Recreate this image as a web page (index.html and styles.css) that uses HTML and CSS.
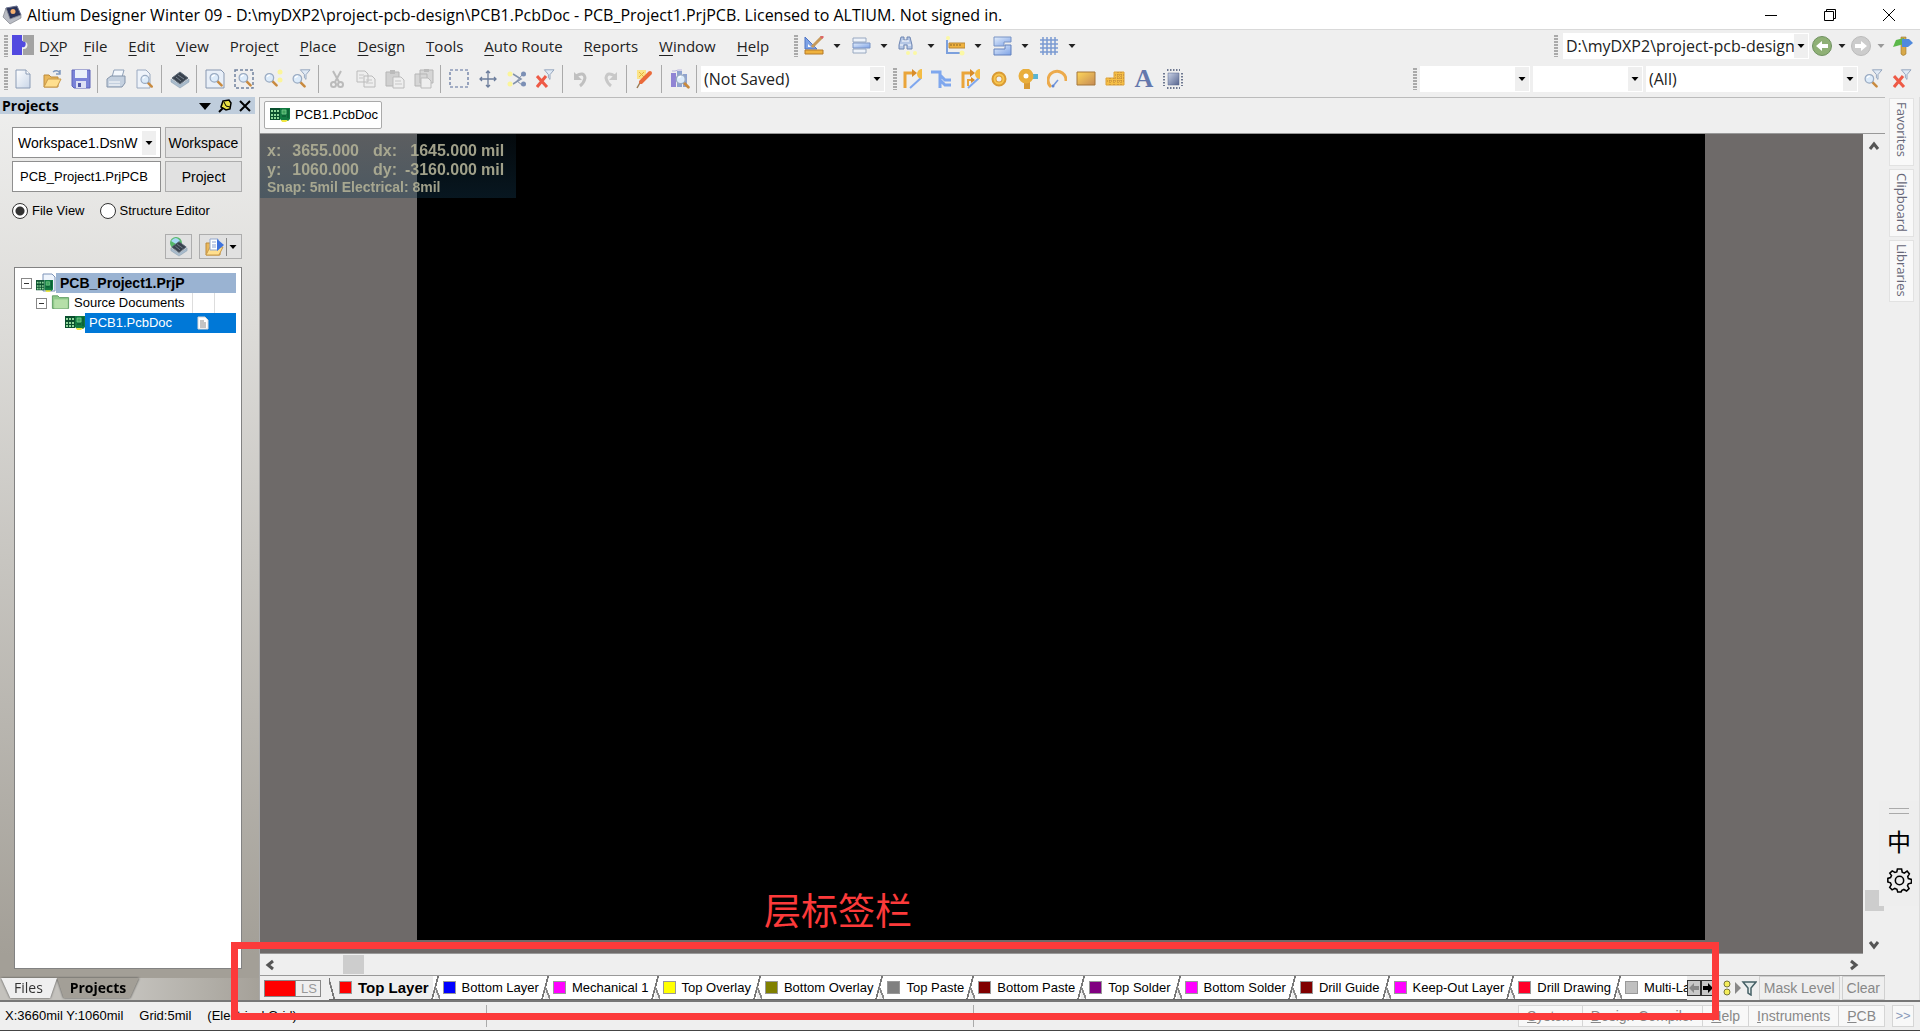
FILE: index.html
```html
<!DOCTYPE html>
<html lang="en">
<head>
    <meta charset="UTF-8">
    <title>Altium Designer Winter 09</title>
    <link rel="stylesheet" href="styles.css">
</head>
<body>
<!-- shared icons -->
<svg class="defs" width="0" height="0">
    <defs>
        <linearGradient id="gBlue" x1="0" y1="0" x2="1" y2="1"><stop offset="0" stop-color="#e4eefb"/><stop offset="1" stop-color="#7da2e6"/></linearGradient>
        <linearGradient id="gGold" x1="0" y1="0" x2="1" y2="1"><stop offset="0" stop-color="#ffd75a"/><stop offset="1" stop-color="#c58a55"/></linearGradient>
        <linearGradient id="gChip" x1="0" y1="0" x2="1" y2="1"><stop offset="0" stop-color="#c9d2e6"/><stop offset="1" stop-color="#56648f"/></linearGradient>
        <linearGradient id="gPage" x1="0" y1="0" x2="1" y2="1"><stop offset="0" stop-color="#fff"/><stop offset="1" stop-color="#c9d6e8"/></linearGradient>
    </defs>
    <symbol id="down" viewBox="0 0 8 8"><path d="M0.500 2h7L4 6z" fill="currentColor"/></symbol>
    <symbol id="lens" viewBox="0 0 20 20"><path d="M11 12l5 5" stroke="#c98a3e" stroke-width="3" stroke-linecap="round"/><circle cx="7.500" cy="8" r="5" fill="#dcebfa" stroke="#9aabc2" stroke-width="1.500"/><path d="M5 7a3 3 0 0 1 3-2" stroke="#fff" stroke-width="1.500" fill="none"/></symbol>
    <symbol id="funnel" viewBox="0 0 20 20"><path d="M8 1h12l-5 6v6l-2-2V7z" fill="#dfe9f5" stroke="#8497b3"/></symbol>
    <symbol id="chip" viewBox="0 0 20 20"><path d="M1 10l9 6 9-6v3l-9 6-9-6z" fill="#a9bccd" stroke="#8296a8" stroke-width=".5"/><path d="M2 9l8-6 8 6-8 6z" fill="#39424e" stroke="#5b6876"/><path d="M8 6l6 4M6 8l5 4" stroke="#77838f"/></symbol>
    <symbol id="pcb" viewBox="0 0 20 16"><path d="M0 1h10v12H0z" fill="#0a4f2e"/><path d="M1 4h2M1 8h2M1 11h2M4 4h2M4 8h2M4 11h2M7 4h2M7 8h2M7 11h2" stroke="#8fd79b" stroke-width="2"/><path d="M10 1h10v11l-2 2h-6l-2-2z" fill="#127a41"/><path d="M12 3h4v4h-4z" fill="#3da35c" stroke="#7fd092" stroke-width=".7"/><path d="M18 2v9M12 9h4" stroke="#0a4f2e"/><path d="M11 13h7l-2 2h-4z" fill="#f1e742"/></symbol>
    <symbol id="folder" viewBox="0 0 20 20"><path d="M2 18V6h5l2 2h7v10z" fill="#e9b75b" stroke="#bd8b3b"/><path d="M2 18l4-8h13l-4 8z" fill="#ffdf8e" stroke="#c99a4a"/></symbol>
    <symbol id="route" viewBox="0 0 20 20"><path d="M3 19V4h8" fill="none" stroke="#eaa53a" stroke-width="3"/><path d="M10 0l5 4-5 4z" fill="#d88c2a"/><path d="M8 19L19 9" stroke="#7fa7ee" stroke-width="2"/><path d="M20 0a4.500 4.500 0 0 0 0 10z" fill="#f4bc44"/></symbol>
</svg>

<header class="titlebar">
    <svg class="appicon" viewBox="0 0 20 20"><path d="M4 3l11-2 4 9-11 4z" fill="#2b3358" stroke="#68708f"/><path d="M4 3L1 12l7 7 11-6V10L8 14z" fill="#b9bcc4" stroke="#74777f" stroke-width=".6"/><circle cx="11" cy="6.500" r="2.500" fill="#f5b070"/></svg>
    <h1>Altium Designer Winter 09 - D:\myDXP2\project-pcb-design\PCB1.PcbDoc - PCB_Project1.PrjPCB. Licensed to ALTIUM. Not signed in.</h1>
    <div class="winbtns">
        <button aria-label="Minimize"><svg viewBox="0 0 14 14"><path d="M1 7.500h12"/></svg></button>
        <button aria-label="Restore"><svg viewBox="0 0 14 14"><path d="M1.500 3.500h9v9h-9zM3.500 3V1.500h9v9H11"/></svg></button>
        <button aria-label="Close"><svg viewBox="0 0 14 14"><path d="M1 1l12 12M13 1L1 13"/></svg></button>
    </div>
</header>

<div class="bar menubar">
    <i class="grip"></i>
    <nav class="menu">
        <button class="dxp"><svg viewBox="0 0 22 20"><path d="M0 0h10v6c5-2 5 8 0 6v8H0z" fill="#5149e0"/><path d="M11 0h11v20H11v-6c6 1 6-9 0-7z" fill="#a3a3a3"/></svg><span>D<u>X</u>P</span></button>
        <button><u>F</u>ile</button>
        <button><u>E</u>dit</button>
        <button><u>V</u>iew</button>
        <button>Proje<u>c</u>t</button>
        <button><u>P</u>lace</button>
        <button><u>D</u>esign</button>
        <button><u>T</u>ools</button>
        <button><u>A</u>uto Route</button>
        <button><u>R</u>eports</button>
        <button><u>W</u>indow</button>
        <button><u>H</u>elp</button>
    </nav>
    <i class="grip"></i>
    <div class="drops">
        <button aria-label="Utility tools"><svg class="ic" viewBox="0 0 20 20"><path d="M1 1l12 12H1z" fill="#7da2e6" stroke="#4e74c4"/><path d="M4 8l3 3H4z" fill="#fff"/><path d="M8 11L18 1" stroke="#c79a5a" stroke-width="3"/><path d="M17 2l2-2" stroke="#d66" stroke-width="3"/><path d="M1 14h18v4H1z" fill="#efb23e" stroke="#b57a28"/></svg><svg class="dn"><use href="#down"/></svg></button>
        <button aria-label="Alignment tools"><svg class="ic" viewBox="0 0 20 20"><path d="M2 2h13v4H2zM2 13h13v4H2z" fill="#eef3fa" stroke="#98a8c0"/><path d="M2 7h17v5H2z" fill="url(#gBlue)" stroke="#7893c4"/></svg><svg class="dn"><use href="#down"/></svg></button>
        <button aria-label="Find selections"><svg class="ic" viewBox="0 0 20 20"><path d="M3 1h3v3h3V1h3l2 8v4H9V9H6v4H1V9z" fill="#b5c7e6" stroke="#6f86b2"/><path d="M2 9h3M10 9h3M4 5h7" stroke="#fff"/><circle cx="10" cy="17" r="2" fill="#fbf8a5"/><circle cx="17" cy="17" r="2" fill="#fbf8a5"/></svg><svg class="dn"><use href="#down"/></svg></button>
        <button aria-label="Dimensions"><svg class="ic" viewBox="0 0 20 20"><path d="M2 4v13h14" fill="none" stroke="#7ca0dd" stroke-width="2"/><path d="M4 7h16v5H4z" fill="#f0b23e" stroke="#b98838"/><path d="M6 8v2M9 8v2M12 8v2M15 8v2" stroke="#8a6427"/><circle cx="3" cy="2" r="2" fill="#fbf8a5"/><circle cx="17" cy="17" r="2.500" fill="#fbf8a5"/></svg><svg class="dn"><use href="#down"/></svg></button>
        <button aria-label="Rooms"><svg class="ic" viewBox="0 0 20 20"><path d="M2 1h17v5h-7v4H2z" fill="url(#gBlue)" stroke="#7893c4"/><path d="M19 9v10H2v-6h11V9z" fill="url(#gBlue)" stroke="#6381bd"/></svg><svg class="dn"><use href="#down"/></svg></button>
        <button aria-label="Grids"><svg class="ic" viewBox="0 0 20 20"><path d="M4 1v18M8 1v18M12 1v18M16 1v18M1 4h18M1 8h18M1 12h18M1 16h18" stroke="#7b9bd2" stroke-width="1.500"/></svg><svg class="dn"><use href="#down"/></svg></button>
    </div>
    <div class="right">
        <i class="grip"></i>
        <label class="combo w-path"><select aria-label="Path"><option>D:\myDXP2\project-pcb-design</option></select><svg class="dn"><use href="#down"/></svg></label>
        <button class="navbtn" aria-label="Back"><svg class="ic" viewBox="0 0 20 20"><circle cx="10" cy="10" r="9.500" fill="#8fb075" stroke="#6f9160"/><path d="M4 10l6-5v3h6v4h-6v3z" fill="#fff"/></svg><svg class="dn"><use href="#down"/></svg></button>
        <button class="navbtn off" aria-label="Forward"><svg class="ic" viewBox="0 0 20 20"><circle cx="10" cy="10" r="9.500" fill="#ccc" stroke="#bbb"/><path d="M16 10l-6-5v3H4v4h6v3z" fill="#fff"/></svg><svg class="dn"><use href="#down"/></svg></button>
        <button class="tool" aria-label="Home"><svg class="ic" viewBox="0 0 20 20"><path d="M8 1h5v17q-3 3-5 0z" fill="#d8a94a" stroke="#9a7730" stroke-width=".6"/><path d="M0 11L3 4l8-2v6z" fill="#5cb84a"/><path d="M9 3h7l4 4-5 4H9z" fill="#5089dc"/></svg></button>
    </div>
</div>

<div class="bar toolbar">
    <i class="grip"></i>
    <div class="tools">
        <button class="tool" aria-label="New"><svg class="ic" viewBox="0 0 20 20"><path d="M3 1h10l4 4v14H3z" fill="url(#gPage)" stroke="#8a9bb5"/><path d="M13 1v4h4" fill="#fff" stroke="#8a9bb5"/></svg></button>
        <button class="tool" aria-label="Open"><svg class="ic" viewBox="0 0 20 20"><use href="#folder"/><path d="M11 3q4-3 7 1m0-3v4h-4" fill="none" stroke="#8099bf" stroke-width="1.500"/></svg></button>
        <button class="tool" aria-label="Save"><svg class="ic" viewBox="0 0 20 20"><path d="M1 1h18v18H3l-2-2z" fill="#7a83d8" stroke="#5d63b8"/><path d="M4 1h12v8H4z" fill="#eaf0fa"/><path d="M5 12h10v7H5z" fill="#dde0f4"/><path d="M7 14h3v4H7z" fill="#5158a8"/></svg></button>
        <i class="sep"></i>
        <button class="tool" aria-label="Print"><svg class="ic" viewBox="0 0 20 20"><path d="M6 8l2-7h10l-2 7z" fill="#f4f8fd" stroke="#8fa0b8"/><path d="M1 10l4-3h14v7l-3 4H1z" fill="#c4d0df" stroke="#8494aa"/><path d="M3 13h11M3 16h11" stroke="#fff"/></svg></button>
        <button class="tool" aria-label="Print preview"><svg class="ic" viewBox="0 0 20 20"><path d="M2 1h9l4 4v14H2z" fill="#eef3fa" stroke="#9aa9c0"/><svg x="4" y="4" width="16" height="16"><use href="#lens"/></svg></svg></button>
        <i class="sep"></i>
        <button class="tool" aria-label="Devices"><svg class="ic"><use href="#chip"/></svg></button>
        <i class="sep"></i>
        <button class="tool" aria-label="Fit document"><svg class="ic" viewBox="0 0 20 20"><path d="M1 1h15l3 3v15H1z" fill="#e8eff8" stroke="#8797b0"/><svg x="3" y="2" width="17" height="17"><use href="#lens"/></svg></svg></button>
        <button class="tool" aria-label="Fit area"><svg class="ic" viewBox="0 0 20 20"><path d="M1 1h18v18H1z" fill="none" stroke="#71829f" stroke-width="1.500" stroke-dasharray="3 2"/><svg x="3" y="2" width="17" height="17"><use href="#lens"/></svg></svg></button>
        <button class="tool" aria-label="Zoom selected"><svg class="ic" viewBox="0 0 20 20"><svg x="0" y="2" width="17" height="17"><use href="#lens"/></svg><circle cx="17" cy="3" r="2.500" fill="#fbf59a"/><circle cx="17" cy="11" r="2.500" fill="#fbf59a"/></svg></button>
        <button class="tool" aria-label="Zoom filtered"><svg class="ic" viewBox="0 0 20 20"><svg x="-1" y="3" width="17" height="17"><use href="#lens"/></svg><use href="#funnel" width="20" height="16"/></svg></button>
        <i class="sep"></i>
        <button class="tool" aria-label="Cut" disabled><svg class="ic" viewBox="0 0 20 20"><path d="M6 2l6 11M14 2L8 13" stroke="#bbb" stroke-width="2"/><circle cx="6.500" cy="15.500" r="2.500" fill="none" stroke="#bbb" stroke-width="2"/><circle cx="13.500" cy="15.500" r="2.500" fill="none" stroke="#bbb" stroke-width="2"/></svg></button>
        <button class="tool" aria-label="Copy" disabled><svg class="ic" viewBox="0 0 20 20"><path d="M1 2h8l3 3v8H1zM8 7h8l3 3v8H8z" fill="#eee" stroke="#bbb"/><path d="M3 6h5M3 9h4M10 11h6M10 14h7" stroke="#c6c6c6"/></svg></button>
        <button class="tool" aria-label="Paste" disabled><svg class="ic" viewBox="0 0 20 20"><path d="M1 3h13v14H1z" fill="#d0d0d0" stroke="#b5b5b5"/><path d="M5 1h5v4H5z" fill="#bbb"/><path d="M8 8h8l3 3v8H8z" fill="#eee" stroke="#bbb"/><path d="M10 12h6M10 15h7" stroke="#c6c6c6"/></svg></button>
        <button class="tool" aria-label="Rubber stamp" disabled><svg class="ic" viewBox="0 0 20 20"><path d="M6 1h13v13H6zM1 5h12v12H1z" fill="#d6d6d6" stroke="#b5b5b5"/><path d="M10 0h5v3h-5z" fill="#bbb"/><path d="M7 9h7l3 3v7H7z" fill="#eee" stroke="#bbb"/></svg></button>
        <i class="sep"></i>
        <button class="tool" aria-label="Select area"><svg class="ic" viewBox="0 0 20 20"><path d="M1 1h18v17H1z" fill="none" stroke="#5b6f9b" stroke-width="1.200" stroke-dasharray="3 2"/></svg></button>
        <button class="tool" aria-label="Move"><svg class="ic" viewBox="0 0 20 20"><path d="M10 2v16M2 10h16M8 4l2-2 2 2M8 16l2 2 2-2M4 8l-2 2 2 2M16 8l2 2-2 2" fill="none" stroke="#6c7d9c" stroke-width="1.300"/></svg></button>
        <button class="tool" aria-label="Deselect"><svg class="ic" viewBox="0 0 20 20"><path d="M6 5l8 5-8 5" fill="none" stroke="#8392ab" stroke-width="1.500"/><path d="M9 13l6-7M10 12l5 4" stroke="#8392ab"/><circle cx="3" cy="5" r="2.500" fill="#fbf59a"/><circle cx="3" cy="15" r="2.500" fill="#fbf59a"/><circle cx="16.500" cy="5" r="2.500" fill="#7b8fb5"/><circle cx="16.500" cy="15" r="2.500" fill="#7b8fb5"/></svg></button>
        <button class="tool" aria-label="Clear filter"><svg class="ic" viewBox="0 0 20 20"><use href="#funnel" width="20" height="16"/><path d="M1 7l10 11M10 7L1 18" stroke="#ee5a46" stroke-width="3"/></svg></button>
        <i class="sep"></i>
        <button class="tool" aria-label="Undo" disabled><svg class="ic" viewBox="0 0 20 20"><path d="M5 7q8-5 9 2-1 5-5 8" fill="none" stroke="#c0c0c0" stroke-width="3"/><path d="M3 3v8h8z" fill="#c0c0c0"/></svg></button>
        <button class="tool" aria-label="Redo" disabled><svg class="ic" viewBox="0 0 20 20"><path d="M15 7Q7 2 6 9q1 5 5 8" fill="none" stroke="#c8c8c8" stroke-width="3"/><path d="M17 3v8H9z" fill="#c8c8c8"/></svg></button>
        <i class="sep"></i>
        <button class="tool" aria-label="Cross probe"><svg class="ic" viewBox="0 0 20 20"><path d="M2 1h9v9H2z" fill="#fbe488"/><path d="M4 3l5 5M9 3L4 8" stroke="#e7b53c"/><path d="M2 19l4-7" stroke="#9a7a52" stroke-width="1.500"/><path d="M6 13l9-9" stroke="#ea6a3a" stroke-width="4" stroke-linecap="round"/></svg></button>
        <i class="sep"></i>
        <button class="tool" aria-label="Browse components"><svg class="ic" viewBox="0 0 20 20"><path d="M1 4h5v14H1z" fill="#9084d4"/><path d="M7 2h5v16H7zM13 5h4v13h-4z" fill="#8fa3d0"/><path d="M2 2h3l3-1h4" stroke="#b9b4dd" fill="none"/><svg x="4" y="3" width="18" height="18"><use href="#lens"/></svg></svg></button>
        <i class="sep"></i>
    </div>
    <label class="combo w-saved"><select aria-label="Saved query"><option>(Not Saved)</option></select><svg class="dn"><use href="#down"/></svg></label>
    <i class="grip"></i>
    <div class="tools">
        <button class="tool" aria-label="Interactive routing"><svg class="ic"><use href="#route"/></svg></button>
        <button class="tool" aria-label="Multi-routing"><svg class="ic" viewBox="0 0 20 20"><path d="M0 3h9v16M9 6l5 5h6M9 11l5 5h6" fill="none" stroke="#7fa7ee" stroke-width="3"/></svg></button>
        <button class="tool" aria-label="Differential pair"><svg class="ic" viewBox="0 0 20 20"><use href="#route"/><path d="M8 17v-6h4" fill="none" stroke="#eaa53a" stroke-width="2"/><path d="M11 8l4 3-4 3z" fill="#d88c2a"/></svg></button>
        <button class="tool" aria-label="Pad"><svg class="ic" viewBox="0 0 20 20"><circle cx="10" cy="10" r="5" fill="none" stroke="#d99a34" stroke-width="5"/><circle cx="10" cy="10" r="4.500" fill="none" stroke="#f7c64f" stroke-width="2"/></svg></button>
        <button class="tool" aria-label="Via"><svg class="ic" viewBox="0 0 20 20"><path d="M6 12h6v8H6z" fill="#d99a34"/><path d="M13 5h7v5h-7z" fill="#58b4d4"/><circle cx="8" cy="7" r="5" fill="#fff" stroke="#e9ae3c" stroke-width="5"/></svg></button>
        <button class="tool" aria-label="Arc"><svg class="ic" viewBox="0 0 20 20"><path d="M4 18A9 9 0 1 1 19 12" fill="none" stroke="#ecaa4c" stroke-width="3"/><path d="M6 17l5-6" stroke="#7297dd" stroke-width="1.500"/><circle cx="6" cy="17" r="1.500" fill="#5d85d4"/></svg></button>
        <button class="tool" aria-label="Fill"><svg class="ic" viewBox="0 0 20 20"><path d="M1 3h18v13H1z" fill="url(#gGold)" stroke="#a5763a"/></svg></button>
        <button class="tool" aria-label="Polygon"><svg class="ic" viewBox="0 0 20 20"><path d="M9 3h10v13H1V9h8z" fill="#f6bf45" stroke="#dca23a"/><path d="M2 12h17M10 6h9M10 9h9M5 9v7M9 9v7M13 3v13M16 3v13" stroke="#b9823a" stroke-dasharray="1 1"/></svg></button>
        <button class="tool letter" aria-label="String">A</button>
        <button class="tool" aria-label="Component"><svg class="ic" viewBox="0 0 20 20"><path d="M4 1h13M4 19h13M1 4v13M19 4v13" fill="none" stroke="#6e7890" stroke-width="2" stroke-dasharray="1.500 1.500"/><path d="M5 4h11v12H5z" fill="url(#gChip)" stroke="#56648f" stroke-width=".5"/></svg></button>
    </div>
    <div class="right">
        <i class="grip"></i>
        <label class="combo w-small"><select aria-label="Net"><option></option></select><svg class="dn"><use href="#down"/></svg></label>
        <label class="combo w-small"><select aria-label="Component"><option></option></select><svg class="dn"><use href="#down"/></svg></label>
        <label class="combo w-all"><select aria-label="Filter"><option>(All)</option></select><svg class="dn"><use href="#down"/></svg></label>
        <button class="tool" aria-label="Apply filter"><svg class="ic" viewBox="0 0 20 20"><svg x="-1" y="3" width="17" height="17"><use href="#lens"/></svg><use href="#funnel" width="20" height="16"/></svg></button>
        <button class="tool" aria-label="Clear current filter"><svg class="ic" viewBox="0 0 20 20"><use href="#funnel" width="20" height="16"/><path d="M1 7l10 11M10 7L1 18" stroke="#ee5a46" stroke-width="3"/></svg></button>
    </div>
</div>

<main class="work">
    <aside class="panel">
        <header class="panel-head">
            <h2>Projects</h2>
            <button aria-label="Panel menu"><svg viewBox="0 0 14 14"><path d="M1 4h12l-6 7z"/></svg></button>
            <button aria-label="Pin"><svg viewBox="0 0 14 14"><path d="M1 13l4-4" stroke="#000" stroke-width="2"/><path d="M5 2l6-1 2 3-1 6-4 1-5-3z" fill="#e8df45" stroke="#000" stroke-width="1.500"/><path d="M6 3l2 4 4 1" fill="none" stroke="#000"/></svg></button>
            <button aria-label="Close panel"><svg viewBox="0 0 14 14"><path d="M2 2l10 10M12 2L2 12" stroke="#000" stroke-width="2"/></svg></button>
        </header>
        <div class="panel-body">
            <div class="pick">
                <label class="field combo"><select aria-label="Workspace file"><option>Workspace1.DsnW</option></select><svg class="dn"><use href="#down"/></svg></label>
                <button>Workspace</button>
                <input class="field" type="text" value="PCB_Project1.PrjPCB" aria-label="Project file">
                <button>Project</button>
            </div>
            <div class="views">
                <label><input type="radio" name="view" checked>File View</label>
                <label><input type="radio" name="view">Structure Editor</label>
            </div>
            <div class="actions">
                <button aria-label="Compile"><svg class="ic" viewBox="0 0 20 20"><circle cx="7" cy="6" r="6" fill="#55b86a"/><path d="M2 4q5-6 9 0l-4 3z" fill="#a8d8f5"/><use href="#chip" y="2" width="20" height="18"/></svg></button>
                <button class="wide" aria-label="Open project"><svg class="ic" viewBox="0 0 20 20"><use href="#folder"/><path d="M6 2h8v11H6z" fill="#fff" stroke="#93a7cc"/><path d="M8 5h4M8 8h4M8 10h4" stroke="#8aa0d0"/><path d="M13 2l7 6-7 6z" fill="#3f73dd"/></svg><i class="bar-v"></i><svg class="dn"><use href="#down"/></svg></button>
            </div>
            <ul class="tree">
                <li class="lv1"><i class="minus"></i><svg class="ic" viewBox="0 0 20 20"><path d="M7 1h9l3 3v14H7z" fill="#eef4fc" stroke="#7d93b8"/><use href="#pcb" y="6" width="17" height="14"/></svg><span>PCB_Project1.PrjP</span></li>
                <li class="lv2"><i class="minus"></i><svg class="ic" viewBox="0 0 20 20"><path d="M1 16V2h6l2 2h10v12z" fill="#8fc98a" stroke="#5c9a61"/><path d="M3 6h15v10H3z" fill="#b5dfa8"/></svg><span>Source Documents</span><i class="cell"></i><i class="cell"></i></li>
                <li class="lv3"><svg class="ic"><use href="#pcb"/></svg><span>PCB1.PcbDoc</span><svg class="doc" viewBox="0 0 12 14"><path d="M1 1h7l3 3v9H1z" fill="#fff" stroke="#d8d8d8"/><path d="M3 5h4M3 7h6M3 9h6M3 11h6" stroke="#888"/></svg></li>
            </ul>
        </div>
        <div class="panel-tabs">
            <div class="tabset">
                <button class="files">Files</button>
                <button class="current">Projects</button>
            </div>
        </div>
    </aside>

    <section class="editor">
        <div class="doctabs">
            <button><svg class="ic"><use href="#pcb"/></svg>PCB1.PcbDoc</button>
        </div>
        <div class="view">
            <div class="canvas">
                <div class="board"></div>
                <div class="hud">
                    <b>x:</b><b class="num">3655.000</b><b>dx:</b><b class="num delta">1645.000</b><b>mil</b>
                    <b>y:</b><b class="num">1060.000</b><b>dy:</b><b class="num delta">-3160.000</b><b>mil</b>
                    <b class="snap">Snap: 5mil Electrical: 8mil</b>
                </div>
            </div>
            <div class="vscroll">
                <svg viewBox="0 0 12 12"><path d="M2 9l4-5 4 5"/></svg>
                <i class="thumb"></i>
                <svg viewBox="0 0 12 12"><path d="M2 3l4 5 4-5"/></svg>
            </div>
        </div>
        <div class="hscroll">
            <svg viewBox="0 0 12 12"><path d="M9 2L4 6l5 4"/></svg>
            <i class="thumb"></i>
            <svg viewBox="0 0 12 12"><path d="M3 2l5 4-5 4"/></svg>
        </div>
        <div class="layers">
            <button class="ls"><i></i>LS</button>
            <div class="tabs">
                <button class="current"><i class="c-red"></i>Top Layer</button>
                <button><i class="c-blue"></i>Bottom Layer</button>
                <button><i class="c-magenta"></i>Mechanical 1</button>
                <button><i class="c-yellow"></i>Top Overlay</button>
                <button><i class="c-olive"></i>Bottom Overlay</button>
                <button><i class="c-gray"></i>Top Paste</button>
                <button><i class="c-maroon"></i>Bottom Paste</button>
                <button><i class="c-purple"></i>Top Solder</button>
                <button><i class="c-magenta"></i>Bottom Solder</button>
                <button><i class="c-maroon"></i>Drill Guide</button>
                <button><i class="c-magenta"></i>Keep-Out Layer</button>
                <button><i class="c-crimson"></i>Drill Drawing</button>
                <button><i class="c-silver"></i>Multi-Layer</button>
            </div>
            <div class="shift">
                <button disabled aria-label="Scroll tabs left"><svg viewBox="0 0 12 12"><path d="M1 6l5-5v3h5v4H6v3z" fill="#888"/></svg></button>
                <button aria-label="Scroll tabs right"><svg viewBox="0 0 12 12"><path d="M11 6L6 1v3H1v4h5v3z"/></svg></button>
            </div>
            <div class="mask">
                <svg viewBox="0 0 34 16"><circle cx="4" cy="4" r="3" fill="#f5ee5a" stroke="#77753a"/><circle cx="4" cy="12" r="3" fill="#f5ee5a" stroke="#77753a"/><path d="M12 2l6 6-6 6z" fill="#888"/><path d="M20 2h13l-5 6v7l-3-2V8z" fill="#e3eaea" stroke="#456066" stroke-width="1.500"/></svg>
                <button>Mask Level</button>
                <button>Clear</button>
            </div>
        </div>
    </section>

    <aside class="sidetabs">
        <button>Favorites</button>
        <button>Clipboard</button>
        <button>Libraries</button>
    </aside>
</main>

<footer class="status">
    <div class="cell-first"><span>X:3660mil Y:1060mil</span><span>Grid:5mil</span><span>(Electrical Grid)</span></div>
    <div class="cell-mid"></div>
    <div class="panels">
        <button><u>S</u>ystem</button>
        <button><u>D</u>esign Compiler</button>
        <button><u>H</u>elp</button>
        <button><u>I</u>nstruments</button>
        <button><u>P</u>CB</button>
    </div>
    <button class="more">&gt;&gt;</button>
</footer>

<div class="ime">
    <i></i>
    <span lang="zh">中</span>
    <svg viewBox="0 0 24 24"><path d="M10 1h4l.6 3 2 .9L19.300 3l2.200 2.700-1.600 2.600.6 1.900 3 .8v3.400l-3 .8-.8 1.900 1.500 2.700-2.400 2.300-2.600-1.500-1.900.8L13.500 23h-3.200l-.8-2.600-2-.8L4.900 21 2.600 18.700l1.500-2.600-.8-1.900-2.500-.8V10l2.600-.8.9-1.900L2.700 5 5 2.800l2.600 1.500L9.400 3.800z"/><circle cx="12" cy="12" r="4"/></svg>
</div>

<div class="mark-box"></div>
<div class="mark-text" lang="zh">层标签栏</div>
</body>
</html>
```
FILE: styles.css
```css
*{box-sizing:border-box;}
body,h1,h2,ul,li{margin:0;padding:0;}
ul{list-style-type:none;}
body{position:relative;display:flex;flex-direction:column;height:100vh;overflow:hidden;background:#efefef;color:#000;font:13px/16px "Liberation Sans",Arial,sans-serif;border-bottom:1px solid #444;}
button,input,select{font:inherit;color:inherit;padding:0;margin:0;border:0;background:none;border-radius:0;}
svg{display:block;flex:none;}
.defs{position:absolute;}
.ic{width:20px;height:20px;}
.dn{width:8px;height:8px;}

/* title bar */
.titlebar{display:flex;align-items:center;flex:none;height:30px;padding-left:2px;background:#fff;border-bottom:1px solid #d9d9d9;}
.appicon{width:20px;height:20px;margin-right:5px;}
.titlebar h1{flex:1;font:16px/26px "Open Sans","Noto Sans",sans-serif;white-space:nowrap;}
.winbtns{display:flex;padding-right:2px;}
.winbtns button{width:59px;height:28px;display:flex;align-items:center;justify-content:center;}
.winbtns svg{width:14px;height:14px;fill:none;stroke:#000;}

/* menu and toolbars */
.bar{display:flex;align-items:center;flex:none;height:32px;padding:0 4px;font:15px/22px "Open Sans","Noto Sans",sans-serif;color:#222;}
.toolbar{height:35px;padding-bottom:2px;}
.grip{flex:none;width:4px;height:22px;background:repeating-linear-gradient(#aaa 0 2px,#efefef 2px 3px);}
.menu{display:flex;gap:21px;padding:0 25px 0 4px;white-space:nowrap;}
.menu u{text-underline-offset:3px;}
.menu .dxp{display:flex;gap:5px;margin-right:-5px;}
.dxp svg{width:22px;height:20px;}
.drops{display:flex;padding-left:6px;}
.drops button{display:flex;align-items:center;gap:9px;width:47px;}
.right{display:flex;align-items:center;margin-left:auto;gap:3px;}
.navbtn{display:flex;align-items:center;gap:6px;width:36px;}
.navbtn.off{color:#999;}
.combo{display:grid;grid-template-columns:1fr 14px;align-items:center;height:26px;padding:1px;background:#fff;}
.bar .combo{font-size:16px;}
.combo select{grid-area:1/1/2/2;appearance:none;width:100%;height:24px;padding-left:2px;overflow:hidden;outline:0;}
.combo .dn{justify-self:center;width:14px;height:24px;padding:8px 3px;background:#efefef;color:#000;}
.w-path{width:246px;margin-left:2px;}
.w-small{width:110px;}
.w-all{width:212px;}
.w-saved{width:184px;margin-right:8px;}
.tools{display:flex;align-items:center;gap:3px;padding:0 2px;}
.tool{display:flex;align-items:center;justify-content:center;width:26px;height:26px;}
.letter{font:bold 26px/26px "Liberation Serif",serif;color:#6478ac;}
.sep{width:3px;height:28px;border-left:1px solid #aaa;}

.work{flex:1;display:flex;min-height:0;}

/* projects panel */
.panel{flex:none;display:flex;flex-direction:column;width:259px;background:linear-gradient(#efefee,#dddcd9 25%,#a39f97 95%);}
.panel-head{display:flex;align-items:center;gap:6px;height:17px;margin-right:4px;padding:0 3px 0 2px;background:#bfcddc;}
.panel-head h2{flex:1;font:bold 14px/17px "Open Sans",sans-serif;}
.panel-head svg{width:14px;height:14px;}
.panel-body{flex:1;display:flex;flex-direction:column;padding:13px 17px 9px 12px;}
.pick{display:grid;grid-template-columns:1fr 77px;gap:3px 4px;font-size:14px;}
.pick button{height:31px;background:#e1e1e1;border:1px solid #adadad;}
.field,.field.combo{width:100%;min-width:0;height:31px;padding:0 4px 0 3px;background:#fff;border:1px solid #8f8f8f;}
input.field{font-size:13px;padding-left:7px;}
.views{display:flex;gap:15px;padding:11px 0 15px;}
.views label{display:flex;align-items:center;gap:4px;white-space:nowrap;}
.views input{appearance:none;width:16px;height:16px;border:1px solid #333;border-radius:50%;background:#fff;}
.views input:checked{background:radial-gradient(#333 0 4px,#fff 5px);}
.actions{display:flex;justify-content:flex-end;gap:7px;}
.actions button{display:flex;align-items:center;justify-content:center;gap:4px;width:27px;height:25px;background:#e1e1e1;border:1px solid #adadad;}
.actions .wide{width:43px;gap:2px;}
.bar-v{width:1px;height:18px;background:#888;}
.tree{flex:1;margin:8px 0 0 2px;padding:5px 5px 0 6px;background:#fff;border:1px solid #828282;}
.tree li{display:flex;align-items:center;height:20px;}
.tree .minus{flex:none;width:11px;height:11px;margin-right:4px;border:1px solid #888;background:linear-gradient(#333,#333) center/5px 1px no-repeat;}
.tree span{line-height:20px;white-space:nowrap;}
.lv1 span{flex:1;padding-left:4px;background:#9ab3d2;font-weight:bold;font-size:14px;overflow:hidden;}
.lv2{padding-left:15px;}
.lv2 .ic{width:19px;height:18px;}
.lv2 span{flex:1;padding-left:4px;}
.cell{width:22px;height:20px;border-left:1px solid #ddd;}
.lv3{padding-left:44px;}
.lv3 span{align-self:stretch;flex:1;padding-left:4px;background:#0078d7;color:#fff;}
.lv3 .doc{width:39px;height:20px;padding:3px 27px 3px 0;background:#0078d7;}
.panel-tabs{height:22px;background:linear-gradient(90deg,#c4c2bd 130px,#a5a199);}
.tabset{display:flex;filter:drop-shadow(0 0 1px #444);}
.panel-tabs button{height:20px;font:14px/18px "Open Sans",sans-serif;}
.files{width:57px;background:#efefef;clip-path:polygon(2% 0,100% 0,88% 100%,18% 100%);color:#333;}
.panel-tabs .current{width:82px;background:#a39f97;font-weight:bold;clip-path:polygon(0 0,100% 0,89% 100%,8% 100%);}

/* editor */
.editor{flex:1;min-width:0;display:flex;flex-direction:column;border-left:1px solid #aaa;border-top:1px solid #bbb;}
.doctabs{flex:none;height:36px;padding:3px 4px;border-bottom:1px solid #999;}
.doctabs button{display:flex;align-items:center;gap:5px;height:28px;padding:0 3px 0 5px;background:#fff;border:1px solid #aaa;border-radius:2px;}
.view{flex:1;display:flex;min-height:0;}
.canvas{position:relative;flex:1;display:flex;padding:0 158px 13px 157px;background:#6e6a69;border-bottom:1px solid #999;}
.board{flex:1;background:#000;}
.hud{position:absolute;left:0;top:0;display:grid;grid-template-columns:18px 80px 27px 73px 26px;grid-auto-rows:19px;align-content:start;column-gap:4px;width:256px;height:64px;padding:7px 0 0 7px;background:linear-gradient(rgba(20,45,60,.2),rgba(20,60,85,.38));color:#b1b096;font-size:16px;line-height:19px;white-space:nowrap;}
.hud b{opacity:.9;}
.hud .num{text-align:right;padding-right:10px;}
.hud .delta{padding:0;}
.hud .snap{grid-column:1/6;font-size:14px;line-height:16px;}
.vscroll{display:flex;flex-direction:column;align-items:center;width:22px;padding:6px 0 3px;}
.vscroll svg,.hscroll svg{width:12px;height:12px;fill:none;stroke:#555;stroke-width:3;}
.vscroll .thumb{width:19px;height:21px;margin:auto 0 28px;background:#cdcdcd;}
.hscroll{flex:none;display:flex;align-items:center;height:21px;padding:0 25px 0 4px;}
.hscroll .thumb{width:21px;height:19px;margin:0 auto 0 67px;background:#cdcdcd;}
.layers{flex:none;display:flex;align-items:center;height:25px;border-top:1px solid #999;white-space:nowrap;}
.ls{flex:none;display:flex;width:57px;height:17px;margin:0 8px 0 4px;border:1px solid #888;color:#999;line-height:16px;}
.ls i{width:31px;height:15px;margin-right:5px;background:#f00;border-right:1px solid #888;}
.tabs{flex:1;display:flex;min-width:0;height:24px;overflow:hidden;}
.tabs button{flex:none;display:flex;align-items:center;gap:6px;height:24px;padding:0 4px 0 13px;background:#fff;border-bottom:1px solid #666;}
.tabs button::before{content:"";align-self:stretch;width:10px;margin:0 -3px 0 -16px;background:linear-gradient(68deg,#efefef 40%,#888 42% 60%,transparent 62%) right bottom/5px 12px no-repeat,linear-gradient(105deg,transparent 45%,#777 46% 56%,transparent 57%);}
.tabs .current{background:#efefef;font-weight:bold;font-size:15px;}
.tabs .current::before{background:linear-gradient(75deg,transparent 45%,#777 46% 56%,transparent 57%);}
.tabs i{width:13px;height:13px;border:1px solid #999;}
.c-red{background:#f00;}
.c-blue{background:#00f;}
.c-magenta{background:#f0f;}
.c-yellow{background:#ff0;}
.c-olive{background:#808000;}
.c-gray{background:#808080;}
.c-maroon{background:#800000;}
.c-purple{background:#800080;}
.c-crimson{background:#ff0028;}
.c-silver{background:#c0c0c0;}
.shift{display:flex;margin-right:8px;}
.shift button{width:14px;height:16px;background:#c8c8c8;border:1px solid #333;}
.shift svg{width:12px;height:12px;}
.mask{display:flex;align-items:center;gap:2px;height:24px;color:#888;font-size:14px;}
.mask svg{width:34px;height:16px;}
.mask button{height:24px;padding:0 4px;border:1px solid #d0d0d0;}

/* right edge */
.sidetabs{flex:none;width:35px;display:flex;flex-direction:column;gap:3px;padding:1px 0 0 4px;border-right:1px solid #ddd;}
.sidetabs button{writing-mode:vertical-rl;width:25px;height:68px;padding:3px 0;text-align:left;background:#f9f9f9;border:1px solid #e2e2e2;color:#667;font:13px/20px "Open Sans",sans-serif;}
.sidetabs button:last-child{height:62px;}

/* status bar */
.status{flex:none;display:flex;align-items:center;height:30px;padding-right:6px;border-top:2px solid #777;}
.cell-first{display:flex;gap:16px;width:487px;padding-left:5px;border-right:1px solid #aaa;line-height:22px;}
.cell-mid{width:487px;height:22px;border-right:1px solid #aaa;}
.panels{display:flex;margin-left:auto;color:#888;background:#f8f8f8;font-size:14px;}
.panels button{height:22px;padding:0 8px;border:1px solid #d5d5d5;margin-left:-1px;}
.more{width:22px;height:22px;margin-left:7px;border:1px solid #d5d5d5;color:#8a9aba;background:#f8f8f8;}

.ime{position:absolute;right:1px;bottom:124px;display:flex;flex-direction:column;align-items:center;gap:11px;width:40px;height:105px;padding-top:7px;background:#eee;}
.ime i{width:20px;height:6px;border:solid #aaa;border-width:1px 0;}
.ime span{font:24px/32px "Noto Sans CJK SC",sans-serif;}
.ime svg{width:25px;height:25px;fill:none;stroke:#000;stroke-width:1.5;}

.mark-box{position:absolute;left:231px;right:201px;bottom:10px;height:78px;border:7px solid #fc3a3a;pointer-events:none;}
.mark-text{position:absolute;left:764px;bottom:94px;font:37px/54px "Noto Sans CJK SC",sans-serif;color:#fc3a3a;}
```
